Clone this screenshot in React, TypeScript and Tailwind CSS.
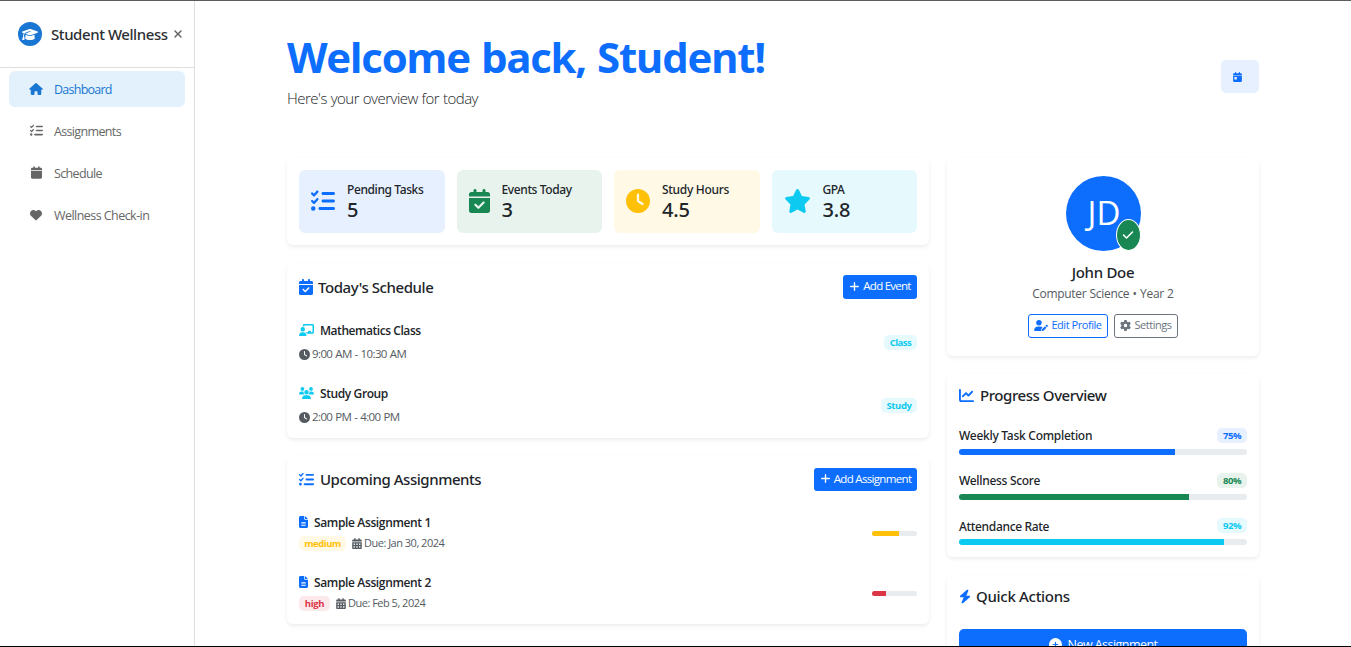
import type { ReactNode } from "react";
import {
  FaBolt, FaCalendar, FaCalendarCheck, FaCalendarDay, FaCalendarDays, FaChalkboardUser, FaChartLine,
  FaCheck, FaCirclePlus, FaClock, FaFileLines, FaGear, FaGraduationCap, FaHeart, FaHouse, FaListCheck,
  FaPlus, FaStar, FaUserPen, FaUsers, FaXmark,
} from "react-icons/fa6";

const card = "rounded-md bg-white shadow-[0_2px_4px_rgba(0,0,0,0.075)]";
const medium = "font-['Noto_Sans','Open_Sans',sans-serif] font-medium";

function Tile({ bg, icon, label, labelClass, value }: { bg: string; icon: ReactNode; label: string; labelClass: string; value: string }) {
  return (
    <div className={`flex h-[63px] flex-1 items-center gap-3 rounded-md px-3 ${bg}`}>
      <span className="pb-px">{icon}</span>
      <div className={`pt-px ${medium}`}>
        <div className={`h-[18px] text-[12px] leading-[18px] ${labelClass}`}>{label}</div>
        <div className="h-6 text-[20px] leading-[21px] tracking-[-0.2px]">{value}</div>
      </div>
    </div>
  );
}

function Badge({ className, children }: { className: string; children: ReactNode }) {
  return <span className={`flex h-[15px] shrink-0 items-center justify-center rounded-[5px] text-[9.5px] leading-[15px] font-bold ${className}`}>{children}</span>;
}

function NavItem({ icon, label, active, className }: { icon: ReactNode; label: string; active?: boolean; className: string }) {
  return (
    <a className={`flex h-9 items-center rounded-md pl-5 ${active ? "bg-[#e3f1fd] text-[#1976d2]" : "text-[#666]"}`}>
      <span className="flex w-[14px] justify-center pb-px">{icon}</span>
      <span className={`ml-[11px] pt-px text-[12.5px] leading-[18px] ${className}`}>{label}</span>
    </a>
  );
}

function Event({ icon, title, titleClass, time, badge }: { icon: ReactNode; title: string; titleClass: string; time: string; badge: ReactNode }) {
  return (
    <div className="flex h-[63px] items-center justify-between">
      <div>
        <div className={`flex h-[23px] items-center gap-[6px] text-[12px] font-semibold ${titleClass}`}>{icon}<span className="leading-[18px]">{title}</span></div>
        <div className="flex h-6 items-center gap-[2px] text-[11.5px] tracking-[-0.6px] [word-spacing:0.5px] text-[#555b61]"><FaClock className="size-[11px]" /><span>{time}</span></div>
      </div>
      {badge}
    </div>
  );
}

function Assignment({ title, badge, due, bar }: { title: string; badge: ReactNode; due: string; bar: string }) {
  return (
    <div className="flex h-[60px] items-center justify-between">
      <div>
        <div className="flex h-[21px] items-center gap-[6px] text-[12px] font-semibold tracking-[-0.36px]"><FaFileLines className="mb-[3px] h-3 w-[9px] text-[#0d6efd]" /><span className="pb-px leading-[18px]">{title}</span></div>
        <div className="flex h-5 items-center text-[11px] tracking-[-0.5px] text-[#555b61]">
          {badge}<FaCalendarDays className="mr-[2px] ml-[6px] h-[11px] w-[10px]" /><span>{due}</span>
        </div>
      </div>
      <div className="h-[5px] w-[45px] overflow-hidden rounded-full bg-[#e9ecef]"><div className={`h-full ${bar}`} /></div>
    </div>
  );
}

function Progress({ label, labelClass, value, badge, bar }: { label: string; labelClass: string; value: string; badge: string; bar: string }) {
  return (
    <div className="h-[45px]">
      <div className="flex h-[21px] items-center justify-between">
        <span className={`pt-px text-[12px] leading-[18px] ${medium} ${labelClass}`}>{label}</span>
        <Badge className={`w-[30px] tracking-[-0.4px] ${badge}`}>{value}</Badge>
      </div>
      <div className="mt-[3px] h-[6px] overflow-hidden rounded-full bg-[#e9ecef]"><div className={`h-full ${bar}`} /></div>
    </div>
  );
}

export default function App() {
  return (
    <div className="flex h-[647px] w-[1351px] overflow-hidden border-t border-b border-t-[#5c5c5c] border-b-black bg-white font-['Open_Sans','Noto_Sans',sans-serif] whitespace-nowrap text-[#212529]">
      <aside className="w-[195px] shrink-0 border-r border-[#dedede]">
        <header className="flex h-[67px] items-center border-b border-[#dedede] pl-[18px]">
          <span className="flex size-6 items-center justify-center rounded-full bg-[#1976d2] text-white"><FaGraduationCap className="h-[13px] w-4" /></span>
          <span className={`ml-[9px] w-[121px] text-[15px] leading-[22px] tracking-[-0.43px] text-[#2c2f33] ${medium}`}>Student Wellness</span>
          <FaXmark className="size-[12px] text-[#666]" />
        </header>
        <nav className="flex flex-col gap-[6px] pt-[3px] pr-[9px] pl-[9px]">
          <NavItem active label="Dashboard" className="tracking-[-0.75px]" icon={<FaHouse className="h-3 w-[14px]" />} />
          <NavItem label="Assignments" className="tracking-[-0.65px]" icon={<FaListCheck className="size-[13px]" />} />
          <NavItem label="Schedule" className="tracking-[-0.65px]" icon={<FaCalendar className="h-[13px] w-[11px]" />} />
          <NavItem label="Wellness Check-in" className="tracking-[-0.55px]" icon={<FaHeart className="size-3" />} />
        </nav>
      </aside>

      <main className="w-[1064px] shrink-0 pl-[92px]">
        <header className="flex h-[157px] items-start justify-between">
          <div className="pt-[28px]">
            <h1 className="h-[57px] text-[42px] leading-[56px] font-bold tracking-[-1.3px] text-[#0d6efd] [word-spacing:1.5px]">Welcome back, Student!</h1>
            <p className="h-[24px] text-[15px] leading-[24px] font-light tracking-[-0.5px] [word-spacing:0.3px]">Here's your overview for today</p>
          </div>
          <button className="mt-[59px] flex h-[33px] w-[38px] items-center rounded-[5px] bg-[#e7f0ff] pl-3 text-[#0d6efd]"><FaCalendarDay className="h-[10px] w-[9px]" /></button>
        </header>

        <div className="flex items-start gap-[18px]">
          <div className="flex w-[642px] shrink-0 flex-col gap-[18px]">
            <section className={`flex h-[87px] gap-3 p-3 ${card}`}>
              <Tile bg="bg-[#e7f0ff]" label="Pending Tasks" labelClass="tracking-[-0.4px]" value="5" icon={<FaListCheck className="size-6 text-[#0d6efd]" />} />
              <Tile bg="bg-[#e8f3ee]" label="Events Today" labelClass="tracking-[-0.38px]" value="3" icon={<FaCalendarCheck className="h-6 w-[21px] text-[#198754]" />} />
              <Tile bg="bg-[#fff9e6]" label="Study Hours" labelClass="tracking-[-0.3px]" value="4.5" icon={<FaClock className="size-6 text-[#ffc107]" />} />
              <Tile bg="bg-[#e6f9fd]" label="GPA" labelClass="tracking-[-0.5px]" value="3.8" icon={<FaStar className="h-6 w-[27px] text-[#0dcaf0]" />} />
            </section>

            <section className={`h-[175px] px-3 pt-3 ${card}`}>
              <div className="flex h-6 items-center justify-between">
                <h2 className={`flex items-center gap-[6px] text-[15px] tracking-[-0.43px] ${medium}`}><FaCalendarCheck className="h-4 w-[14px] text-[#0d6efd]" /><span className="-ml-px pb-px leading-[22px]">Today's Schedule</span></h2>
                <button className="flex h-6 w-[74px] items-center justify-center gap-[3px] rounded-[3px] bg-[#0d6efd] pb-[2px] text-[11.5px] tracking-[-0.75px] text-white"><FaPlus className="size-[11px]" />Add Event</button>
              </div>
              <div className="pt-[12px]">
                <Event title="Mathematics Class" titleClass="tracking-[-0.45px]" time="9:00 AM - 10:30 AM" icon={<FaChalkboardUser className="mb-[2px] h-3 w-[15px] text-[#0dcaf0]" />} badge={<Badge className="w-[33px] bg-[#e6f9fd] tracking-[-0.5px] text-[#0dcaf0]">Class</Badge>} />
                <Event title="Study Group" titleClass="tracking-[-0.4px]" time="2:00 PM - 4:00 PM" icon={<FaUsers className="mb-px h-3 w-[15px] text-[#0dcaf0]" />} badge={<Badge className="w-9 bg-[#e6f9fd] tracking-[-0.4px] text-[#0dcaf0]">Study</Badge>} />
              </div>
            </section>

            <section className={`h-[168px] px-3 pt-3 ${card}`}>
              <div className="flex h-[23px] items-center justify-between">
                <h2 className={`flex items-center gap-[6px] text-[15px] tracking-[-0.45px] ${medium}`}><FaListCheck className="size-[15px] text-[#0d6efd]" /><span className="pb-[2px] leading-[22px]">Upcoming Assignments</span></h2>
                <button className="flex h-[23px] w-[103px] items-center justify-center gap-[3px] rounded-[3px] bg-[#0d6efd] pb-[2px] text-[11.5px] tracking-[-0.67px] text-white"><FaPlus className="size-[11px]" />Add Assignment</button>
              </div>
              <div className="pt-[12px]">
                <Assignment title="Sample Assignment 1" due="Due: Jan 30, 2024" bar="w-[60%] bg-[#ffc107]" badge={<Badge className="w-[47px] bg-[#fff9e6] tracking-[-0.45px] text-[#ffc107]">medium</Badge>} />
                <Assignment title="Sample Assignment 2" due="Due: Feb 5, 2024" bar="w-[30%] bg-[#dc3545]" badge={<Badge className="w-[31px] bg-[#fbe9ec] tracking-[-0.3px] text-[#dc3545]">high</Badge>} />
              </div>
            </section>
            <section className={`h-20 ${card}`} />
          </div>

          <div className="flex w-[312px] shrink-0 flex-col gap-[18px]">
            <section className={`flex h-[198px] flex-col items-center pt-[18px] ${card}`}>
              <div className="relative flex size-[75px] items-center justify-center rounded-full bg-[#0d6efd] text-[33px] text-white">
                <span className="pb-[2px] pl-[2px] leading-10">JD</span>
                <span className="absolute right-0 bottom-0 flex h-8 w-[25px] items-center justify-center rounded-[50%] border border-white bg-[#198754]"><FaCheck className="size-3" /></span>
              </div>
              <h2 className={`mt-[9px] h-6 text-[15px] leading-6 tracking-[-0.3px] ${medium}`}>John Doe</h2>
              <p className="h-5 text-[12px] leading-5 tracking-[-0.32px] [word-spacing:0.5px] text-[#555b61]">Computer Science • Year 2</p>
              <div className="mt-[10px] flex gap-[6px]">
                <button className="flex h-6 w-20 items-center justify-center gap-[3px] rounded-[3px] border border-[#0d6efd] pb-[2px] text-[11px] tracking-[-0.45px] text-[#0d6efd]"><FaUserPen className="h-[11px] w-[14px]" />Edit Profile</button>
                <button className="flex h-6 w-16 items-center justify-center gap-[3px] rounded-[3px] border border-[#6c757d] pb-[2px] text-[11px] tracking-[-0.45px] text-[#6c757d]"><FaGear className="size-[11px]" />Settings</button>
              </div>
            </section>

            <section className={`h-[183px] px-3 pt-[9px] ${card}`}>
              <h2 className={`flex h-[26px] items-center gap-[6px] text-[15px] tracking-[-0.44px] ${medium}`}><FaChartLine className="mb-px size-[15px] text-[#0d6efd]" /><span className="pb-[2px] leading-[22px]">Progress Overview</span></h2>
              <div className="pt-[16px]">
                <Progress label="Weekly Task Completion" labelClass="tracking-[-0.27px]" value="75%" badge="bg-[#e7f0ff] text-[#0d6efd]" bar="w-3/4 bg-[#0d6efd]" />
                <Progress label="Wellness Score" labelClass="tracking-[-0.3px]" value="80%" badge="bg-[#e8f3ee] text-[#198754]" bar="w-4/5 bg-[#198754]" />
                <Progress label="Attendance Rate" labelClass="mt-[2px] tracking-[-0.33px]" value="92%" badge="bg-[#e6f9fd] text-[#0dcaf0]" bar="w-[92%] bg-[#0dcaf0]" />
              </div>
            </section>

            <section className={`h-[180px] px-3 pt-[9px] ${card}`}>
              <h2 className={`flex h-[26px] items-center gap-[5px] text-[15px] tracking-[-0.3px] ${medium}`}><FaBolt className="mb-px h-[15px] w-[12px] text-[#0d6efd]" /><span className="pb-[2px] leading-[22px]">Quick Actions</span></h2>
              <button className="mt-[19px] flex h-[31px] w-full items-center justify-center gap-[6px] rounded-t-[5px] bg-[#0d6efd] text-[12.5px] tracking-[-0.55px] text-white"><FaCirclePlus className="size-[13px]" /><span className="pt-px">New Assignment</span></button>
            </section>
          </div>
        </div>
      </main>
    </div>
  );
}
